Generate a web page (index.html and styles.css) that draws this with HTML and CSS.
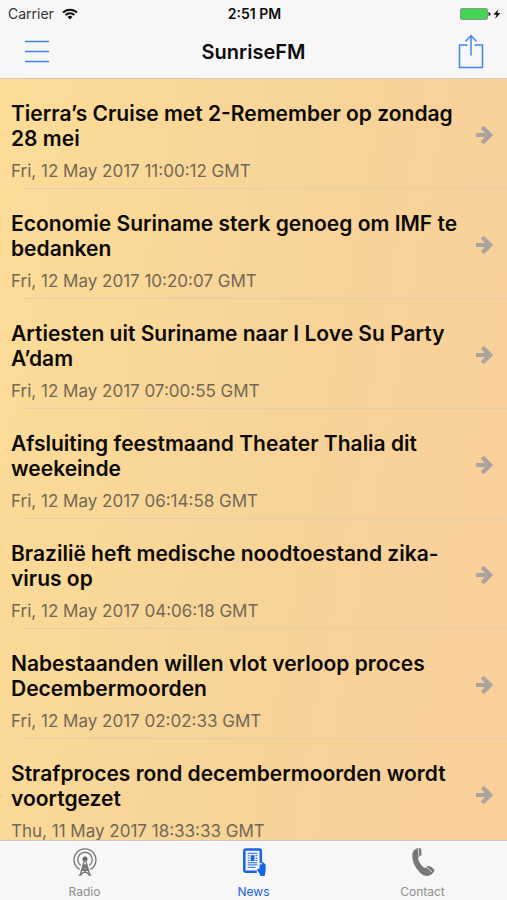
FILE: index.html
```html
<!DOCTYPE html>
<html lang="nl">
<head>
    <meta charset="UTF-8">
    <meta name="viewport" content="width=device-width, initial-scale=1.0">
    <title>SunriseFM</title>
    <link rel="stylesheet" href="styles.css">
</head>
<body>
    <svg class="sprite" aria-hidden="true">
        <symbol id="arrow" viewBox="0 0 18 18">
            <path d="M0 7h9L5.600 3.600a1.500 1.500 0 0 1 0-2L6.600 .6a1.500 1.500 0 0 1 2 0L17.200 9l-8.600 8.400a1.500 1.500 0 0 1-2 0l-1-1a1.500 1.500 0 0 1 0-2L9 11H0z"/>
        </symbol>
    </svg>

    <header class="top">
        <!-- Status Bar -->
        <div class="status-bar">
            <div class="carrier">
                <span>Carrier</span>
                <svg width="16" height="12" viewBox="0 0 16 12" fill="none" stroke="#111" stroke-width="2">
                    <path d="M1 4.500a10 10 0 0 1 14 0M3.600 7a6.300 6.300 0 0 1 8.800 0"/>
                    <path d="M8 11.500L5.500 9a3.600 3.600 0 0 1 5 0z" fill="#111" stroke="none"/>
                </svg>
            </div>
            <div class="time">2:51 PM</div>
            <div class="battery">
                <svg width="42" height="14" viewBox="0 0 42 14">
                    <rect x="1.500" y="1.500" width="27" height="11" rx="1.500" fill="#43d551" stroke="#8a9a8c"/>
                    <path d="M29.500 5a2 2 0 0 1 0 4z" fill="#222"/>
                    <path d="M39.500 2L34.500 7.800h3L36 12l5.500-6h-3.200z" fill="#111"/>
                </svg>
            </div>
        </div>

        <div class="nav-bar">
            <button class="nav-button" type="button" aria-label="Menu">
                <svg width="24" height="36" viewBox="0 0 24 36" fill="none" stroke="#4285ed" stroke-width="1.500">
                    <path d="M0 7.500h24M0 17.500h24M0 27.500h24"/>
                </svg>
            </button>
            <h1>SunriseFM</h1>
            <button class="nav-button" type="button" aria-label="Share">
                <svg width="26" height="36" viewBox="0 0 26 36" fill="none" stroke="#4285ed" stroke-width="1.500">
                    <path d="M9.500 11H1.500v22.500h23V11h-8M13 21.500V2M7.500 7.500L13 1.500l5.500 6"/>
                </svg>
            </button>
        </div>
    </header>

    <main class="news">
        <a class="news-item" href="#">
            <div class="news-text">
                <h2>Tierra’s Cruise met 2-Remember op zondag 28 mei</h2>
                <p>Fri, 12 May 2017 11:00:12 GMT</p>
            </div>
            <svg class="arrow"><use href="#arrow"/></svg>
        </a>
        <a class="news-item" href="#">
            <div class="news-text">
                <h2>Economie Suriname sterk genoeg om IMF te bedanken</h2>
                <p>Fri, 12 May 2017 10:20:07 GMT</p>
            </div>
            <svg class="arrow"><use href="#arrow"/></svg>
        </a>
        <a class="news-item" href="#">
            <div class="news-text">
                <h2>Artiesten uit Suriname naar I Love Su Party A’dam</h2>
                <p>Fri, 12 May 2017 07:00:55 GMT</p>
            </div>
            <svg class="arrow"><use href="#arrow"/></svg>
        </a>
        <a class="news-item" href="#">
            <div class="news-text">
                <h2>Afsluiting feestmaand Theater Thalia dit weekeinde</h2>
                <p>Fri, 12 May 2017 06:14:58 GMT</p>
            </div>
            <svg class="arrow"><use href="#arrow"/></svg>
        </a>
        <a class="news-item" href="#">
            <div class="news-text">
                <h2>Brazilië heft medische noodtoestand zika-virus op</h2>
                <p>Fri, 12 May 2017 04:06:18 GMT</p>
            </div>
            <svg class="arrow"><use href="#arrow"/></svg>
        </a>
        <a class="news-item" href="#">
            <div class="news-text">
                <h2>Nabestaanden willen vlot verloop proces Decembermoorden</h2>
                <p>Fri, 12 May 2017 02:02:33 GMT</p>
            </div>
            <svg class="arrow"><use href="#arrow"/></svg>
        </a>
        <a class="news-item" href="#">
            <div class="news-text">
                <h2>Strafproces rond decembermoorden wordt voortgezet</h2>
                <p>Thu, 11 May 2017 18:33:33 GMT</p>
            </div>
            <svg class="arrow"><use href="#arrow"/></svg>
        </a>
    </main>

    <!-- Tab Bar -->
    <nav class="tab-bar">
        <a class="tab" href="#">
            <svg width="26" height="32" viewBox="0 0 26 32" fill="none" stroke="#777" stroke-width="1.400">
                <path d="M7.500 24.200a11.300 11.300 0 1 1 11 0"/>
                <path d="M8.500 20a7.500 7.500 0 1 1 9 0"/>
                <circle cx="13" cy="13.500" r="2.600" fill="#666" stroke="none"/>
                <path d="M12.500 14L8 30M13.500 14L18 30M11 19.500h4M10 24h6M11 19.500l5 4.500-7 5M15 19.500L10 24l7 5M6.500 30h3M16.500 30h3"/>
            </svg>
            <span>Radio</span>
        </a>
        <a class="tab active" href="#">
            <svg width="26" height="32" viewBox="0 0 26 32" fill="none" stroke="#1763ea">
                <path d="M16 26.500H4.500a1.500 1.500 0 0 1-1.500-1.500V5a1.500 1.500 0 0 1 1.500-1.500h14A1.500 1.500 0 0 1 20 5v12.500" stroke-width="2.600"/>
                <path d="M6.500 7.500h10M6.500 19.500h10M6.500 22h8M6.500 10h2M14.500 10h2M6.500 12.500h2M14.500 12.500h2M6.500 15h2M14.500 15h2M6.500 17.300h10"/>
                <rect x="10" y="10" width="3" height="5" fill="#1763ea"/>
                <path d="M18.500 24l.5-6 1.500 1.500 1.500-3.500 1.200 1.500 1.800 1.500v6.500L24 31h-4.500l-.5-2-3-4.500 1-1z" fill="#1763ea" stroke="none"/>
            </svg>
            <span>News</span>
        </a>
        <a class="tab" href="#">
            <svg width="26" height="32" viewBox="0 0 26 32" fill="#777">
                <path d="M4 4q3-3 7-1.500l.5 7q-2.500 1-3.500 2 0 5.500 5.500 10.500 1 1 2 .5l3-2q4 1 6.500 4.500-2 5-7.500 6-4 .5-7.500-3.500Q1 18.500 2 8q.5-3 2-4z"/>
                <path d="M8 1.500l.8 9M16 21.500l6.500 5.500" fill="none" stroke="#f7f7f7" stroke-width=".8"/>
            </svg>
            <span>Contact</span>
        </a>
    </nav>
</body>
</html>
```
FILE: styles.css
```css
* {
    box-sizing: border-box;
}
body {
    font-family: Inter, "Open Sans", sans-serif;
    margin: 0;
    height: 100vh;
    display: flex;
    flex-direction: column;
    overflow: hidden;
    background-color: #f7f7f7;
    color: #0c0c0c;
}
.sprite {
    display: none;
}
svg {
    display: block;
}
.top {
    flex-shrink: 0;
    border-bottom: 1px solid #d0c7b8;
}
.status-bar {
    display: grid;
    grid-template-columns: 1fr auto 1fr;
    align-items: center;
    height: 27px;
    padding: 0 6px 0 8px;
    font-size: 14px;
}
.carrier {
    display: flex;
    align-items: center;
    gap: 8px;
    color: #333333;
}
.time {
    font-weight: 600;
}
.battery {
    justify-self: end;
}
.nav-bar {
    display: flex;
    align-items: center;
    justify-content: space-between;
    height: 51px;
    padding: 0 23px 1px 25px;
}
.nav-bar h1 {
    margin: 0;
    font-size: 20px;
    font-weight: 600;
}
.nav-button {
    padding: 0;
    border: none;
    background: none;
    cursor: pointer;
}
.news {
    flex: 1;
    min-height: 0;
    overflow: hidden;
    background: linear-gradient(100deg, #fddd98, #f7d498 50%, #facf9b);
}
.news-item {
    display: flex;
    align-items: center;
    justify-content: space-between;
    height: 110px;
    padding: 2px 13px 0 11px;
    color: inherit;
    text-decoration: none;
    /* separator starts a little in from the left edge */
    background: linear-gradient(#e6cbac, #e6cbac) 24px 100% / 100% 1px no-repeat;
}
.news-text {
    width: 94%;
    padding-top: 12px;
}
.news-text h2 {
    margin: 0;
    font-size: 21px;
    line-height: 25px;
    font-weight: 600;
    color: #0c0a05;
}
.news-text p {
    margin: 10px 0 0;
    font-size: 17px;
    line-height: 20px;
    color: #716856;
}
.arrow {
    flex-shrink: 0;
    width: 18px;
    height: 18px;
    fill: #aaa3a0;
}
.tab-bar {
    flex-shrink: 0;
    display: flex;
    height: 60px;
    border-top: 1px solid #cfc8be;
}
.tab {
    flex: 1;
    display: flex;
    flex-direction: column;
    align-items: center;
    gap: 7px;
    padding-top: 5px;
    font-size: 12px;
    line-height: 16px;
    color: #8f8f8f;
    text-decoration: none;
}
.tab.active {
    color: #1763ea;
}
```
